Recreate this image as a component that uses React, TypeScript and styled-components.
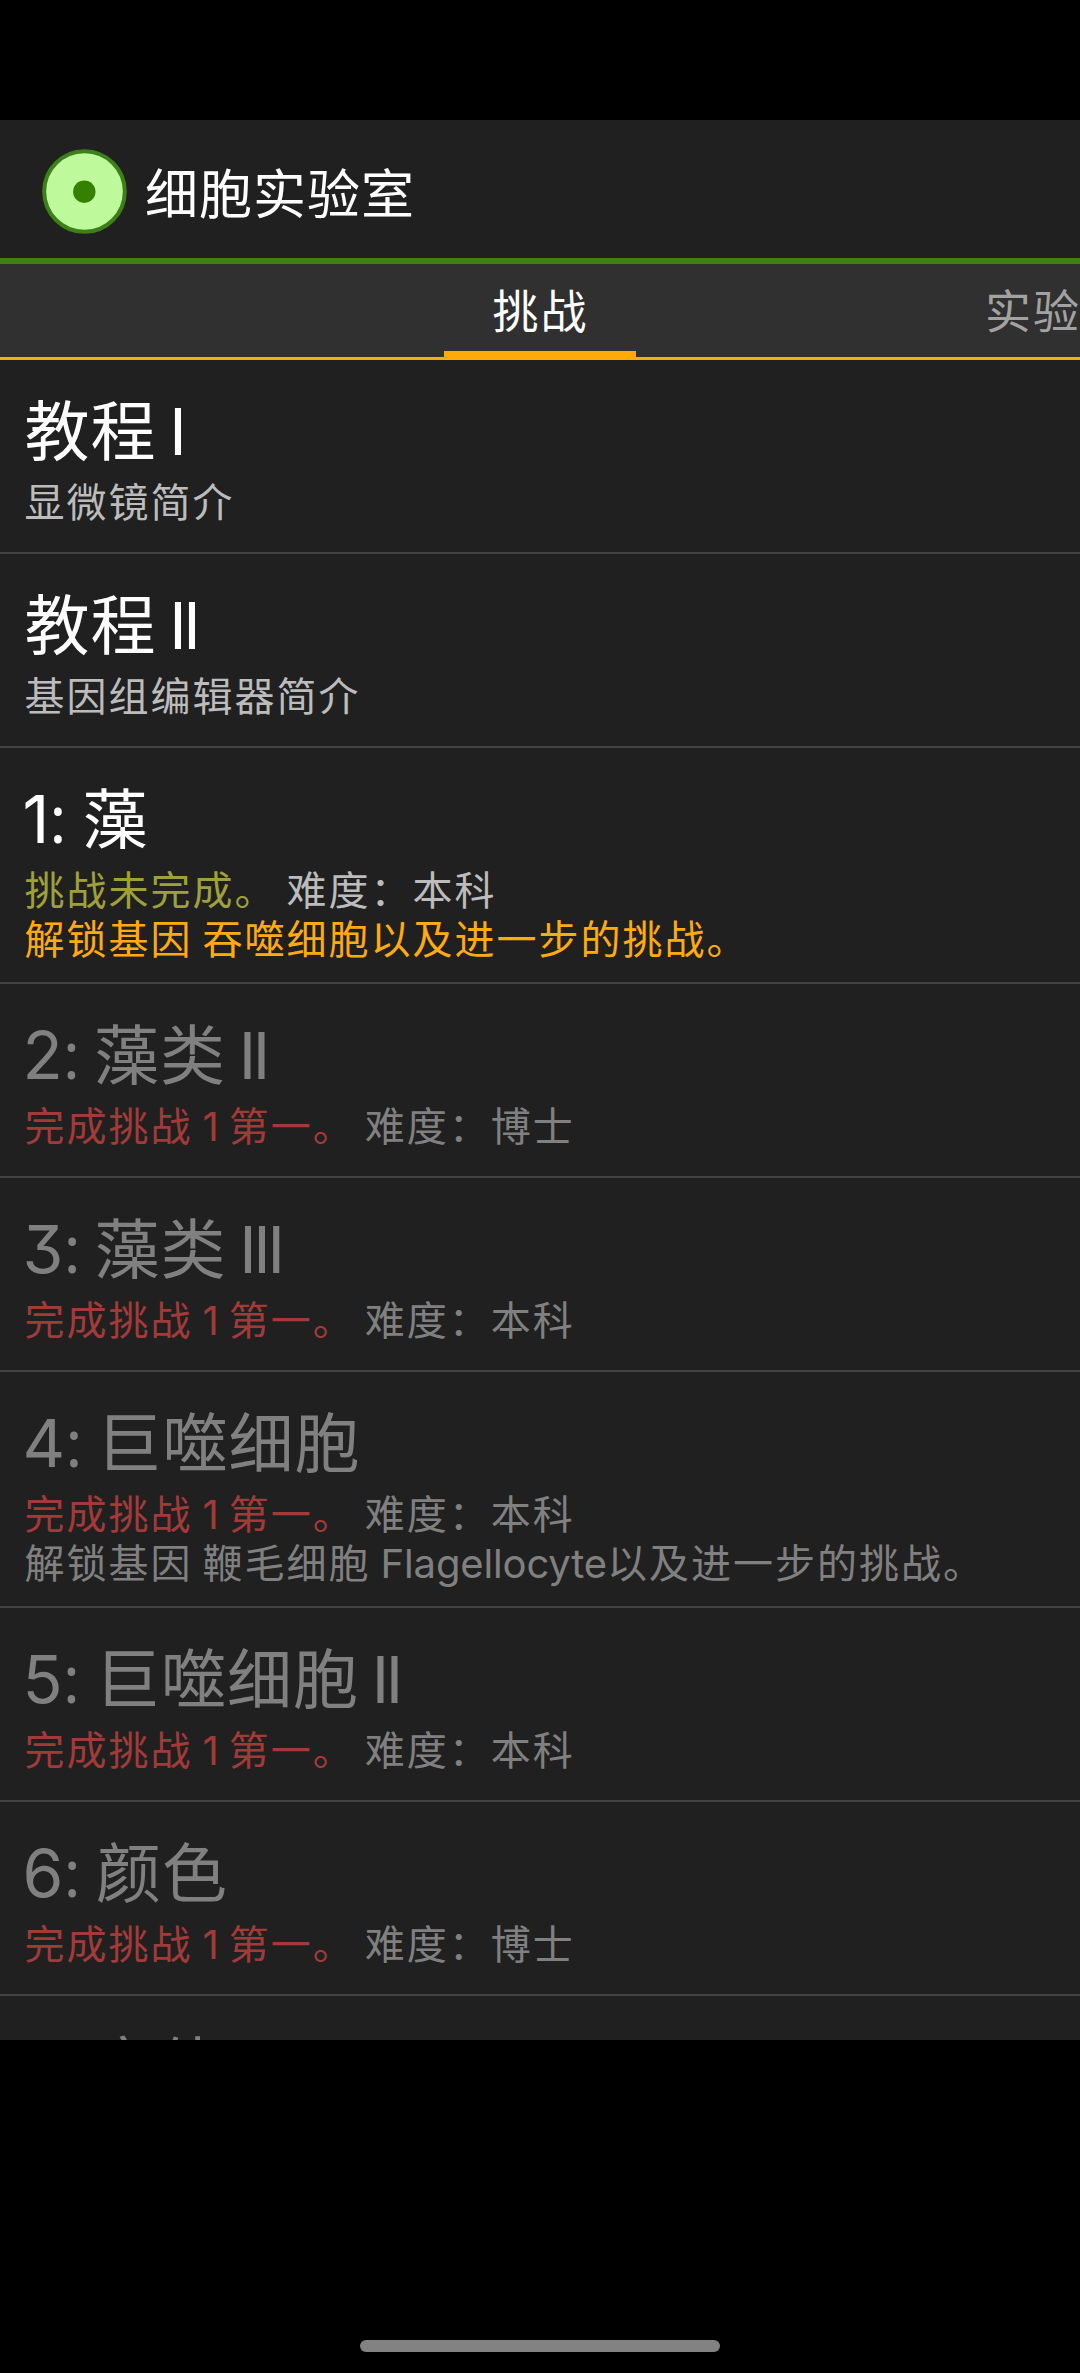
import React from "react";
import styled, { createGlobalStyle, css } from "styled-components";

const Global = createGlobalStyle`
  * { box-sizing: border-box; }
  body { margin: 0; background: #000; }
`;

const Screen = styled.div`
  width: 1080px;
  height: 2373px;
  padding-top: 120px;
  display: flex;
  flex-direction: column;
  background: #000;
  overflow: hidden;
  color: #fff;
  font-family: Inter, "Noto Sans CJK SC", sans-serif;
  font-feature-settings: "cv09" 1, "calt" 0;
`;

const AppWindow = styled.main`
  height: 1920px;
  flex: none;
  display: flex;
  flex-direction: column;
  background: #202020;
  overflow: hidden;
`;

const Header = styled.header`
  height: 144px;
  flex: none;
  display: flex;
  align-items: center;
  padding-left: 42px;
  border-bottom: 6px solid #3f7f17;
`;

const Logo = styled.svg`
  width: 85px;
  height: 85px;
  margin-top: 5px;
`;

const AppTitle = styled.h1`
  margin: 12px 0 0 18px;
  font-size: 53px;
  letter-spacing: 1px;
  line-height: 72px;
  font-weight: 400;
  white-space: nowrap;
`;

const TabStrip = styled.nav`
  height: 96px;
  flex: none;
  display: grid;
  grid-template-columns: 444px 192px 349px auto;
  background: #303030;
  border-bottom: 3px solid #ffaa11;
`;

const Tab = styled.div<{ $active?: boolean }>`
  height: ${(p) => (p.$active ? 96 : 93)}px;
  padding-top: 11px;
  font-size: 46px;
  letter-spacing: 2px;
  line-height: 72px;
  white-space: nowrap;
  text-align: ${(p) => (p.$active ? "center" : "left")};
  color: ${(p) => (p.$active ? "#fff" : "#a2a2a2")};
  ${(p) => p.$active && css`
    padding-left: 1px;
    border-bottom: 9px solid #ffaa0a;
  `}
`;

const List = styled.ul`
  list-style: none;
  margin: 0;
  padding: 0;
`;

const Item = styled.li<{ $tall?: boolean }>`
  height: ${(p) => (p.$tall ? 236 : 194)}px;
  padding: 25px 0 0 24.5px;
  border-bottom: 2px solid #424242;
  white-space: nowrap;
`;

const Name = styled.h2<{ $locked?: boolean }>`
  margin: 0;
  display: flex;
  align-items: baseline;
  font-size: 65px;
  letter-spacing: 1px;
  line-height: 93px;
  height: 93px;
  font-weight: 400;
  white-space: pre;
  word-spacing: -6.5px;
  color: ${(p) => (p.$locked ? "#808080" : "#fff")};
`;

const Index = styled.span<{ $width: number }>`
  flex: none;
  width: ${(p) => p.$width}px;
  margin-left: -2px;
  font-size: 66px;
  letter-spacing: 0;
  line-height: 80px;
`;

const Colon = styled.span`
  font-family: "Open Sans", sans-serif;
  line-height: 0;
`;

const Roman = styled.span`
  letter-spacing: -3.4px;
`;

const Line = styled.p<{ $color: string }>`
  margin: 0;
  font-size: 40px;
  letter-spacing: 2px;
  word-spacing: -3.2px;
  line-height: 49px;
  height: 49px;
  color: ${(p) => p.$color};
`;

const Latin = styled.span`
  letter-spacing: -0.15px;
`;

const Status = styled.span<{ $open?: boolean }>`
  color: ${(p) => (p.$open ? "#9fa03c" : "#a23a3a")};
`;

const HomeBar = styled.div`
  width: 360px;
  height: 12px;
  margin: 300px auto 0;
  border-radius: 6px;
  background: #828282;
`;

type Challenge = {
  index?: number;
  name: string;
  roman?: string;
  intro?: string;
  level?: string;
  reward?: React.ReactNode;
  locked?: boolean;
};

const indexWidths: Record<number, number> = { 1: 60, 2: 71.5, 3: 72, 4: 74, 5: 72.5, 6: 73.5, 7: 69 };

const challenges: Challenge[] = [
  { name: "教程", roman: "I", intro: "显微镜简介" },
  { name: "教程", roman: "II", intro: "基因组编辑器简介" },
  { index: 1, name: "藻", level: "本科", reward: "解锁基因 吞噬细胞以及进一步的挑战。" },
  { index: 2, name: "藻类", roman: "II", level: "博士", locked: true },
  { index: 3, name: "藻类", roman: "III", level: "本科", locked: true },
  {
    index: 4,
    name: "巨噬细胞",
    level: "本科",
    reward: <>解锁基因 鞭毛细胞 <Latin>Flagellocyte</Latin>以及进一步的挑战。</>,
    locked: true,
  },
  { index: 5, name: "巨噬细胞", roman: "II", level: "本科", locked: true },
  { index: 6, name: "颜色", level: "博士", locked: true },
  { index: 7, name: "变体", locked: true },
];

function Row({ item }: { item: Challenge }) {
  const { index, name, roman, intro, level, reward, locked } = item;
  return (
    <Item $tall={!!reward}>
      <Name $locked={locked}>
        {index && (
          <Index $width={indexWidths[index]}>
            {index}
            <Colon>:</Colon>
          </Index>
        )}
        <span>
          {name}
          {roman && <> <Roman>{roman}</Roman></>}
        </span>
      </Name>
      {intro && <Line $color="#bcbcbc">{intro}</Line>}
      {level && (
        <Line $color={locked ? "#808080" : "#bcbcbc"}>
          {locked ? (
            <Status>完成挑战 <Latin>1</Latin> 第一。</Status>
          ) : (
            <Status $open>挑战未完成。</Status>
          )}{" "}
          难度：{level}
        </Line>
      )}
      {reward && <Line $color={locked ? "#808080" : "#ffaa11"}>{reward}</Line>}
    </Item>
  );
}

export default function App() {
  return (
    <>
      <Global />
      <Screen>
        <AppWindow>
          <Header>
            <Logo viewBox="0 0 85 85">
              <circle cx="42.5" cy="42.5" r="40.3" fill="#befa9b" stroke="#3d7f18" strokeWidth="4" />
              <circle cx="42.3" cy="42.7" r="11.2" fill="#348000" />
            </Logo>
            <AppTitle>细胞实验室</AppTitle>
          </Header>
          <TabStrip>
            <span />
            <Tab $active>挑战</Tab>
            <span />
            <Tab>实验</Tab>
          </TabStrip>
          <List>
            {challenges.map((c, i) => (
              <Row key={i} item={c} />
            ))}
          </List>
        </AppWindow>
        <HomeBar />
      </Screen>
    </>
  );
}
